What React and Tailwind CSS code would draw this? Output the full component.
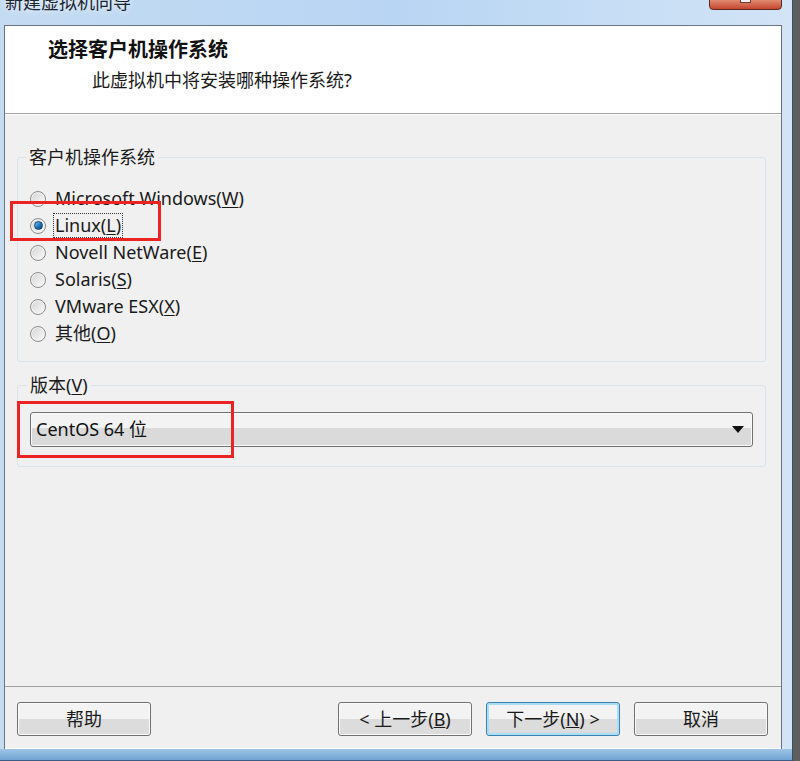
import { useState } from 'react';

const FONT = { fontFamily: '"Noto Sans", "Noto Sans CJK SC", sans-serif' };

const systems = [
    { id: 'win', label: 'Microsoft Windows', key: 'W' },
    { id: 'linux', label: 'Linux', key: 'L' },
    { id: 'netware', label: 'Novell NetWare', key: 'E' },
    { id: 'solaris', label: 'Solaris', key: 'S' },
    { id: 'esx', label: 'VMware ESX', key: 'X' },
    { id: 'other', label: '其他', key: 'O' },
];

function Radio({ checked }) {
    return (
        <span className="w-[16px] h-[16px] rounded-full border border-[#8c8c8c] bg-gradient-to-br from-[#d4d4d4] to-[#fbfbfb] shadow-[inset_0_0_0_1px_#f4f4f4] flex items-center justify-center shrink-0">
            {checked && (
                <span className="w-[9px] h-[9px] rounded-full bg-gradient-to-br from-[#7cc8f2] via-[#1f7cc4] to-[#0d3f6f] border border-[#173f66]" />
            )}
        </span>
    );
}

function Label({ text, k }) {
    return (
        <>
            {text}(<u className="underline-offset-2">{k}</u>)
        </>
    );
}

function WinButton({ children, focused }) {
    return (
        <button
            className={
                'w-[134px] h-[34px] rounded-[3px] border text-[18px] leading-none text-[#1a1a1a] bg-gradient-to-b from-[#f3f3f3] from-50% to-[#dcdcdc] to-50% ' +
                (focused
                    ? 'border-[#3c7fb1] shadow-[inset_0_0_0_2px_#a9def5]'
                    : 'border-[#707070] shadow-[inset_0_0_0_1px_#fbfbfb]')
            }
        >
            {children}
        </button>
    );
}

export default function App() {
    const [os, setOs] = useState('linux');

    return (
        <div className="w-[800px] h-[761px] overflow-hidden bg-[#5e5e5e] flex" style={FONT}>
            <div className="w-[793px] h-full flex flex-col bg-gradient-to-r from-[#c4dbf2] via-[#b8d5f3] to-[#d2e4f6] border-r border-[#3d4f63]">
                {/* title bar */}
                <div className="h-[25px] flex items-start justify-between pl-[5px] pr-[10px] overflow-hidden">
                    <span className="text-[18px] leading-[20px] -mt-[8px] text-[#1b2430] [text-shadow:0_0_6px_#ffffff]">
                        新建虚拟机向导
                    </span>
                    <span className="w-[73px] h-[11px] -mt-[1px] rounded-b-[4px] border border-[#5a2a22] bg-gradient-to-b from-[#e08a72] to-[#c6452e] flex justify-center">
                        <span className="w-[11px] h-[4px] -mt-[1px] bg-[#f4f4f4] border border-[#6b3a30] border-t-0" />
                    </span>
                </div>

                {/* client area */}
                <div className="flex-1 ml-[4px] mr-[10px] flex flex-col border border-[#6a7480] bg-[#f0f0f0]">
                    <div className="h-[88px] bg-white border-b border-[#a0a0a0] flex flex-col">
                        <h1 className="pl-[43px] pt-[10px] text-[20px] leading-[28px] font-bold text-[#111]">
                            选择客户机操作系统
                        </h1>
                        <p className="pl-[87px] pt-[3px] text-[18px] leading-[26px] text-[#1a1a1a]">
                            此虚拟机中将安装哪种操作系统?
                        </p>
                    </div>

                    <div className="flex-1 flex flex-col border-t border-white">
                        <div className="flex-1 flex flex-col pt-[31px] pl-[12px] pr-[15px] relative">
                            <fieldset className="border border-[#dbe2ea] rounded-[3px] px-[8px] pt-[17px] pb-[14px]">
                                <legend className="px-[3px] text-[18px] leading-[22px] text-[#1a1a1a]">
                                    客户机操作系统
                                </legend>
                                {systems.map((s) => (
                                    <label
                                        key={s.id}
                                        className="h-[27px] pl-[4px] flex items-center gap-[7px] text-[18px] text-[#1a1a1a]"
                                        onClick={() => setOs(s.id)}
                                    >
                                        <Radio checked={os === s.id} />
                                        <span
                                            className={
                                                'px-[1px] leading-[23px] border ' +
                                                (os === s.id ? 'border-dotted border-[#333]' : 'border-transparent')
                                            }
                                        >
                                            <Label text={s.label} k={s.key} />
                                        </span>
                                    </label>
                                ))}
                            </fieldset>

                            <fieldset className="mt-[12px] border border-[#dbe2ea] rounded-[3px] px-[8px] pt-[16px] pb-[19px]">
                                <legend className="px-[3px] ml-[1px] text-[18px] leading-[22px] text-[#1a1a1a]">
                                    <Label text="版本" k="V" />
                                </legend>
                                <div className="mx-[4px] h-[35px] rounded-[3px] border border-[#707070] bg-gradient-to-b from-[#f3f3f3] from-45% to-[#dadada] to-45% shadow-[inset_0_0_0_1px_#fafafa] flex items-center justify-between pl-[5px] pr-[8px]">
                                    <span className="text-[18px] text-[#111]">CentOS 64 位</span>
                                    <svg width="12" height="7" viewBox="0 0 12 7">
                                        <path d="M0 0 H12 L6 7 Z" fill="#111" />
                                    </svg>
                                </div>
                            </fieldset>

                            {/* annotation boxes */}
                            <span className="absolute left-[5px] top-[86px] w-[151px] h-[40px] border-[3px] border-[#ec2323]" />
                            <span className="absolute left-[12px] top-[286px] w-[217px] h-[57px] border-[3px] border-[#ec2323]" />
                        </div>

                        <div className="border-t border-[#a0a0a0] shadow-[0_1px_0_#ffffff] pt-[15px] pb-[12px] pl-[12px] pr-[13px] flex items-center">
                            <WinButton>帮助</WinButton>
                            <div className="flex-1" />
                            <div className="flex gap-[14px]">
                                <WinButton>
                                    &lt; 上一步(<u>B</u>)
                                </WinButton>
                                <WinButton focused>
                                    下一步(<u>N</u>) &gt;
                                </WinButton>
                                <WinButton>取消</WinButton>
                            </div>
                        </div>
                    </div>
                </div>

                <div className="h-[12px] bg-gradient-to-b from-[#9fc4e6] to-[#6fa3d2] border-b border-[#3d5e80]" />
            </div>
        </div>
    );
}
